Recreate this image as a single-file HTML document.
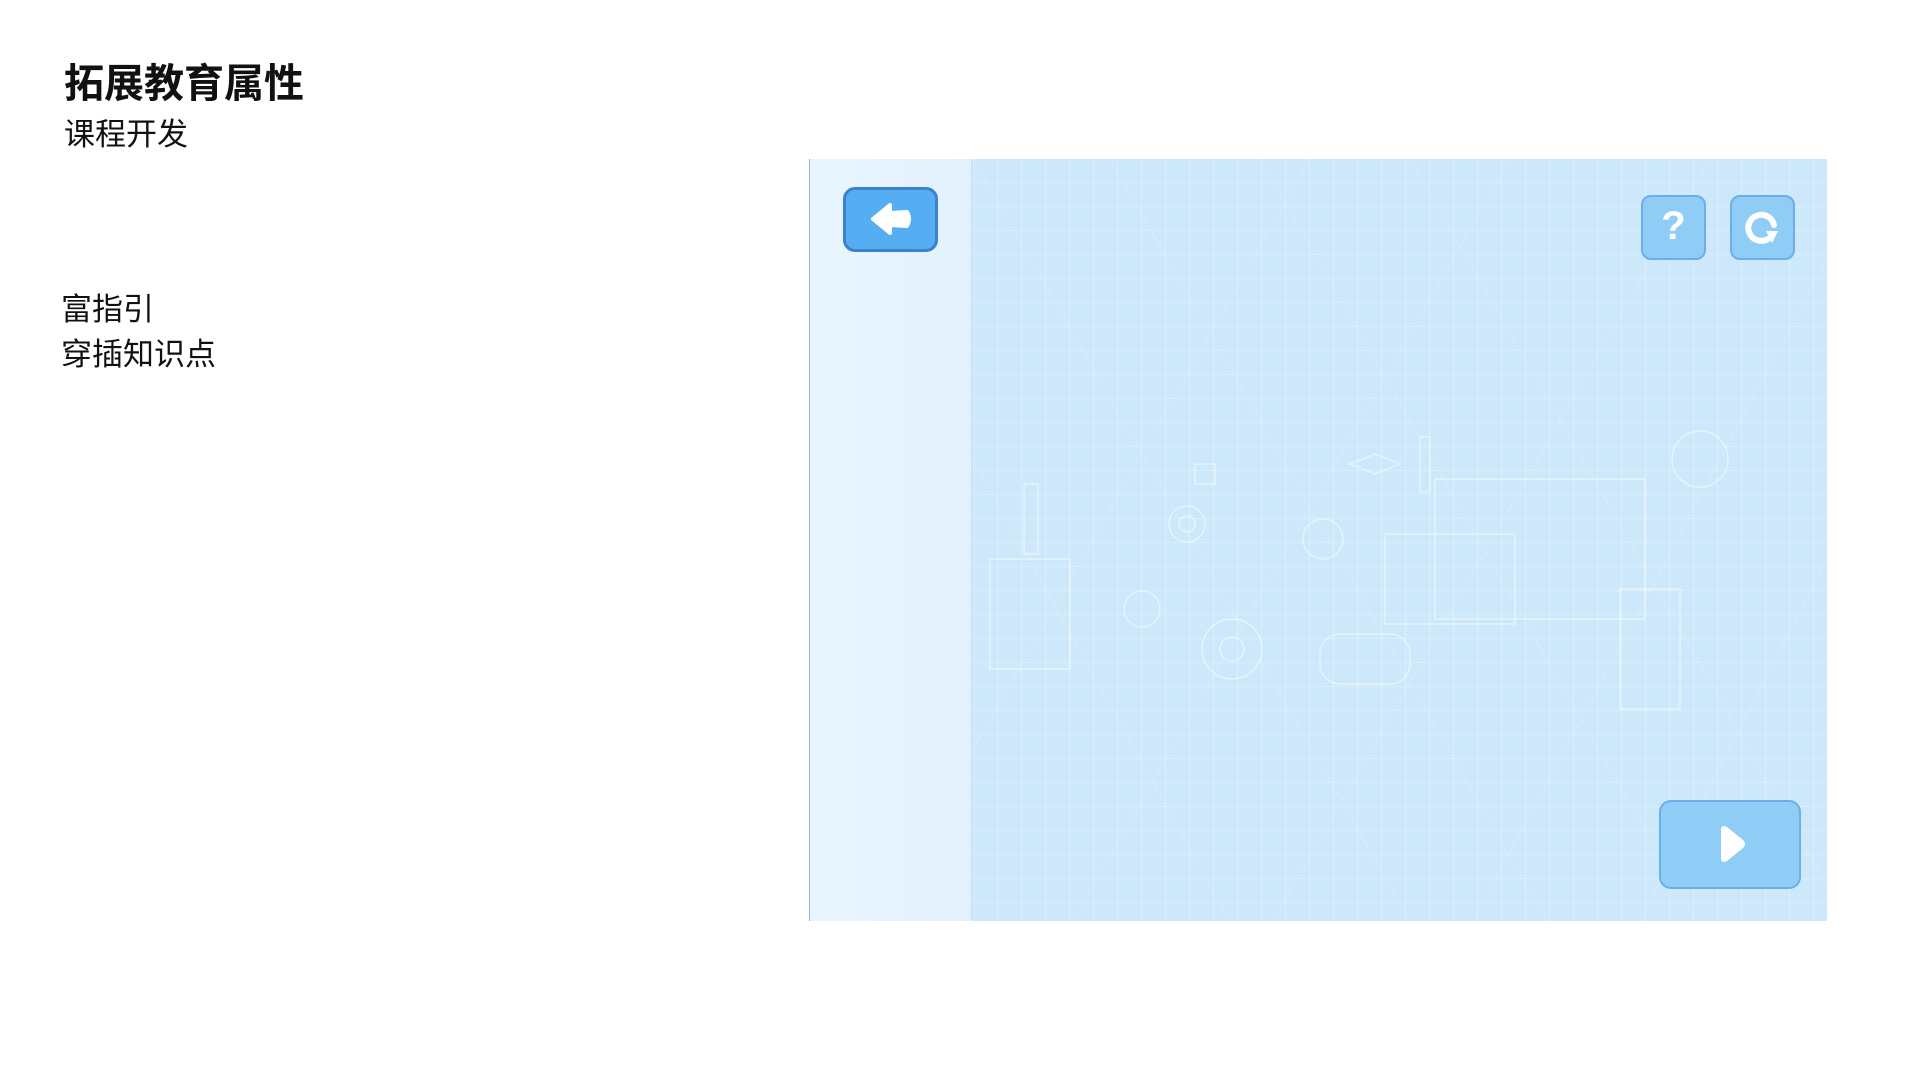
<!DOCTYPE html>
<html><head><meta charset="utf-8"><style>
html,body{margin:0;padding:0;width:1920px;height:1080px;background:#fff;overflow:hidden;font-family:"Liberation Sans","Noto Sans CJK SC",sans-serif;color:#111}
.t{position:absolute;white-space:nowrap}
#panel{position:absolute;left:809px;top:159px;width:1017px;height:762px;background:#cde8fb;overflow:hidden;border-left:1px solid #9fb3c4}
#strip{position:absolute;left:0;top:0;width:161px;height:100%;background:linear-gradient(90deg,#e9f5fe,#e3f1fd);border-right:2px solid #c6e2f8}
#grid{position:absolute;left:163px;top:0;right:0;bottom:0;
background-image:
linear-gradient(90deg,rgba(255,255,255,.28) 1px,transparent 1px),
linear-gradient(0deg,rgba(255,255,255,.28) 1px,transparent 1px);
background-size:24px 24px;}
.btn{position:absolute;box-sizing:border-box;border-radius:10px}
</style></head><body>
<div class="t" style="left:64px;top:59px;font-size:40px;font-weight:bold;line-height:50px">拓展教育属性</div>
<div class="t" style="left:64px;top:115px;font-size:31px;line-height:40px">课程开发</div>
<div class="t" style="left:61px;top:289px;font-size:31px;line-height:42px">富指引</div>
<div class="t" style="left:61px;top:334px;font-size:31px;line-height:42px">穿插知识点</div>
<div id="panel">
 <div id="strip"></div>
 <div id="grid"></div>
 <svg style="position:absolute;left:0;top:0" width="1017" height="762" stroke="rgba(255,255,255,.5)" fill="none" stroke-width="1.5">
  <g stroke="rgba(255,255,255,.2)" stroke-width="1">
   <path d="M163 0 L600 762 M300 0 L737 762 M450 0 L887 762 M600 0 L1017 726 M163 300 L420 762 M500 0 L163 590 M700 0 L263 762 M900 0 L463 762 M1017 100 L663 762 M1017 400 L830 762"/>
  </g>
  <g transform="translate(190,20)">
  <circle cx="187" cy="345" r="18"/><circle cx="187" cy="345" r="8"/>
  <circle cx="232" cy="470" r="30"/><circle cx="232" cy="470" r="12"/>
  <circle cx="323" cy="360" r="20"/>
  <circle cx="142" cy="430" r="18"/>
  <rect x="385" y="355" width="130" height="90"/>
  <rect x="435" y="300" width="210" height="140"/>
  <rect x="620" y="410" width="60" height="120"/>
  <rect x="320" y="455" width="90" height="50" rx="20"/>
  <rect x="195" y="285" width="20" height="20"/>
  <rect x="-10" y="380" width="80" height="110"/>
  <rect x="24" y="305" width="14" height="70"/>
  <rect x="420" y="258" width="10" height="55"/>
  <circle cx="700" cy="280" r="28"/>
  <path d="M350 285 l25 -10 l25 10 l-25 10z"/>
  </g>
 </svg>
 <div class="btn" style="left:33px;top:28px;width:95px;height:65px;background:#55adf2;border:3px solid #3a82cd;border-radius:12px"></div>
 <svg style="position:absolute;left:33px;top:28px" width="95" height="65"><path d="M30 32 L47 18 L47 26 L64 25 Q68 32 64 39 L47 38 L47 46 Z" fill="#fff" stroke="#fff" stroke-width="4" stroke-linejoin="round"/></svg>
 <div class="btn" style="left:831px;top:36px;width:65px;height:65px;background:#8fcdf6;border:2px solid #6daee9"></div>
 <div class="t" style="left:831px;top:42px;width:65px;text-align:center;color:#fff;font-size:40px;font-weight:bold;line-height:50px">?</div>
 <div class="btn" style="left:920px;top:36px;width:65px;height:65px;background:#8fcdf6;border:2px solid #6daee9"></div>
 <svg style="position:absolute;left:920px;top:36px" width="65" height="65"><path d="M38 44 A13 13 0 1 1 44 30" stroke="#fff" stroke-width="6" fill="none" stroke-linecap="round"/><path d="M36 36 L48 36 L42 48 Z" fill="#fff"/></svg>
 <div class="btn" style="left:849px;top:641px;width:142px;height:89px;background:#8fcdf6;border:2px solid #6daee9;border-radius:12px"></div>
 <svg style="position:absolute;left:849px;top:641px" width="142" height="89"><path d="M62 30 Q62 24 68 27 L84 40 Q88 44 84 48 L68 61 Q62 64 62 58 Z" fill="#fff"/></svg>
</div>
</body></html>
